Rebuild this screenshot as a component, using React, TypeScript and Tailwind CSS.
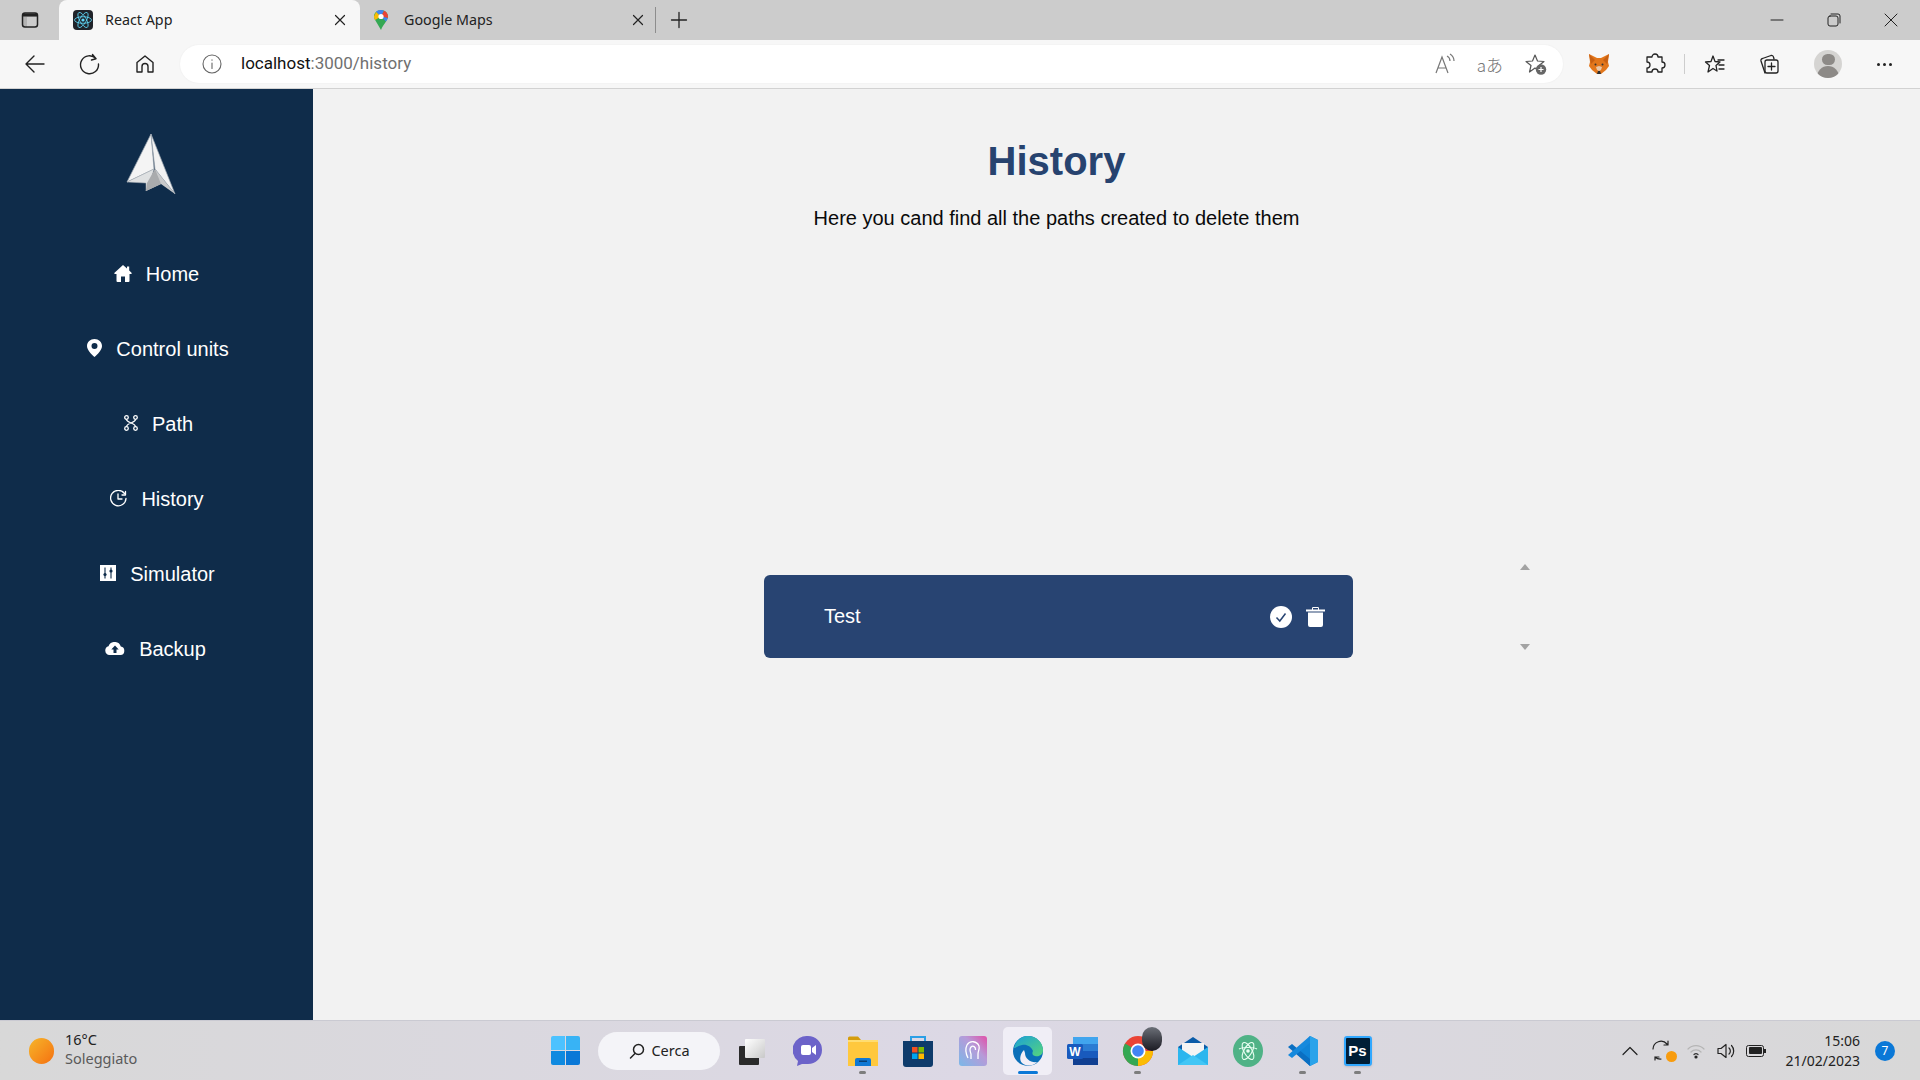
import React from 'react';

const Line: React.FC<{ size?: number; w?: number; color?: string; children: React.ReactNode; vb?: number }> = ({
  size = 20,
  w = 1.4,
  color = '#222',
  vb = 20,
  children,
}) => (
  <svg width={size} height={size} viewBox={`0 0 ${vb} ${vb}`} fill="none" stroke={color} strokeWidth={w} strokeLinecap="round" strokeLinejoin="round">
    {children}
  </svg>
);

const navItems: { label: string; icon: React.ReactNode }[] = [
  {
    label: 'Home',
    icon: (
      <svg width="18" height="17" viewBox="0 0 18 17">
        <path fill="#fff" d="M9 0L13 3.600V1.500H15.200V5.600L18 8.300 17 9H15.500V16A1 1 0 0 1 14.500 17H11V11.500H7V17H3.500A1 1 0 0 1 2.500 16V9H1L0 8.300Z" />
      </svg>
    ),
  },
  {
    label: 'Control units',
    icon: (
      <svg width="15" height="18" viewBox="0 0 15 18">
        <path fillRule="evenodd" fill="#fff" d="M7.500 0C3.300 0 0 3 0 7 0 11 4.500 15.500 7.500 18 10.500 15.500 15 11 15 7 15 3 11.700 0 7.500 0ZM7.500 4A3 3 0 1 1 7.500 10 3 3 0 1 1 7.500 4Z" />
      </svg>
    ),
  },
  {
    label: 'Path',
    icon: (
      <svg width="14" height="16" viewBox="0 0 14 16" fill="none" stroke="#fff" strokeWidth="1.300">
        <circle cx="2.500" cy="2.500" r="1.800" />
        <circle cx="11.500" cy="2.500" r="1.800" />
        <circle cx="2.500" cy="13.500" r="1.800" />
        <circle cx="11.500" cy="13.500" r="1.800" />
        <path d="M2.500 4.300C2.500 8 11.500 8 11.500 11.700M11.500 4.300C11.500 8 2.500 8 2.500 11.700" />
      </svg>
    ),
  },
  {
    label: 'History',
    icon: (
      <Line size={17} w={1.300} color="#fff" vb={17}>
        <path d="M14.500 3.500A7.700 7.700 0 1 0 16 8.500" />
        <path d="M8 4V9H12" />
        <path d="M15.500 1.500V5H12" />
      </Line>
    ),
  },
  {
    label: 'Simulator',
    icon: (
      <svg width="16" height="16" viewBox="0 0 16 16">
        <rect width="16" height="16" fill="#fff" />
        <path d="M5 2.500V13.500M11 2.500V13.500" stroke="#0f2c4a" strokeWidth="1.100" />
        <circle cx="5" cy="9.500" r="1.600" fill="#0f2c4a" />
        <circle cx="11" cy="6" r="1.600" fill="#0f2c4a" />
      </svg>
    ),
  },
  {
    label: 'Backup',
    icon: (
      <svg width="20" height="13" viewBox="0 0 20 13">
        <path fillRule="evenodd" fill="#fff" d="M4.500 13A4.500 4.500 0 0 1 3.500 4.200 6.500 6.500 0 0 1 15.800 4.500 4.300 4.300 0 0 1 15.500 13ZM10 3.500L6.300 7.500H8.500V11H11.500V7.500H13.700Z" />
      </svg>
    ),
  },
];

const Logo = () => (
  <svg width="52" height="64" viewBox="0 0 52 64">
    <path d="M27 1L3 49 30 36Z" fill="#f4f4f4" stroke="#9aa3ad" strokeWidth="0.700" />
    <path d="M27 1L51 61 31 36Z" fill="#f2f2f2" stroke="#9aa3ad" strokeWidth="0.700" />
    <path d="M3 49L30 36 28 43 22 58 22 50Z" fill="#dfe1e2" stroke="#aab0b6" strokeWidth="0.500" />
    <path d="M31 36L51 61 37 51 22 58Z" fill="#c9cacb" />
    <path d="M31 36L37 51 22 58 23 50Z" fill="#a9abad" />
  </svg>
);

const ReactFavicon = () => (
  <svg width="20" height="20" viewBox="0 0 20 20" className="rounded-sm">
    <rect width="20" height="20" fill="#20232a" />
    <g fill="none" stroke="#61dafb" strokeWidth="0.800">
      <ellipse cx="10" cy="10" rx="8.500" ry="3.300" />
      <ellipse cx="10" cy="10" rx="8.500" ry="3.300" transform="rotate(60 10 10)" />
      <ellipse cx="10" cy="10" rx="8.500" ry="3.300" transform="rotate(120 10 10)" />
    </g>
    <circle cx="10" cy="10" r="1.600" fill="#61dafb" />
  </svg>
);

const MapsFavicon = () => (
  <svg width="16" height="22" viewBox="0 0 16 22">
    <path d="M8 1C3.800 1 1 4 1 7.500 1 9.500 2 11 3 12.500L8 21C9 18 11 15.500 13 12.500 14 11 15 9.500 15 7.500 15 4 12.200 1 8 1Z" fill="#34a853" />
    <path d="M3.100 2.700L1 7.500C1 9 1.500 10 2 11L8 7.500Z" fill="#fbbc04" />
    <path d="M3 2.800C4.300 1.600 6 1 8 1 9 1 10 1.200 11 1.700L8 7.500Z" fill="#4285f4" />
    <path d="M11 1.700C13 2.500 15 4.500 15 7.500 15 8 15 8.500 14.700 9L8 7.500Z" fill="#ea4335" />
    <path d="M14.700 9C14.300 10.500 13.500 11.700 13 12.500L8 7.500Z" fill="#4285f4" />
    <circle cx="8" cy="7.500" r="2.600" fill="#fff" />
  </svg>
);

const Fox = () => (
  <svg width="22" height="22" viewBox="0 0 22 22">
    <path d="M1 1L9 5H13L21 1 20 9 21 13 18 17 13 21H9L4 17 1 13 2 9Z" fill="#e2761b" />
    <path d="M1 1L7 7 3 11ZM21 1L15 7 19 11Z" fill="#c85f12" />
    <path d="M8 14L11 13 14 14 13 17 11 18 9 17Z" fill="#e9c7a8" />
    <path d="M9 21L10 18H12L13 21Z" fill="#2f2f2f" />
    <circle cx="7.500" cy="11.500" r="1" fill="#333" />
    <circle cx="14.500" cy="11.500" r="1" fill="#333" />
  </svg>
);

const taskApps: { dot?: 'grey' | 'blue'; active?: boolean; icon: React.ReactNode }[] = [
  {
    icon: (
      <svg width="28" height="30" viewBox="0 0 28 30">
        <defs>
          <linearGradient id="desk" x1="0" y1="0" x2="1" y2="1">
            <stop offset="0" stopColor="#ffffff" />
            <stop offset="1" stopColor="#c9c9c9" />
          </linearGradient>
        </defs>
        <rect x="0" y="10" width="20" height="19" rx="1" fill="#2a2a2a" />
        <rect x="6" y="3" width="20" height="19" rx="1" fill="url(#desk)" />
      </svg>
    ),
  },
  {
    icon: (
      <svg width="30" height="32" viewBox="0 0 30 32">
        <path d="M15 1A14 14 0 0 1 15 29H9L4 31 5 26A14 14 0 0 1 15 1Z" fill="#6c63c9" />
        <rect x="8" y="10" width="10" height="10" rx="2" fill="#fff" />
        <path d="M19 13L23 10V20L19 17Z" fill="#fff" />
      </svg>
    ),
  },
  {
    dot: 'grey',
    icon: (
      <svg width="30" height="32" viewBox="0 0 30 32">
        <path d="M0 3A1.500 1.500 0 0 1 1.500 1.500H10L13 5H0Z" fill="#d59d0c" />
        <rect x="0" y="5" width="30" height="26" fill="#ffc83d" />
        <rect x="0" y="5" width="30" height="2" fill="#ffdd70" />
        <path d="M7 25A2 2 0 0 1 9 23H21A2 2 0 0 1 23 25V31H7Z" fill="#0f78d4" />
        <rect x="11" y="25.500" width="8" height="1.500" fill="#083f73" />
      </svg>
    ),
  },
  {
    icon: (
      <svg width="30" height="34" viewBox="0 0 30 34">
        <path d="M8 7V3H22V7" fill="none" stroke="#2b9fe6" strokeWidth="2" />
        <path d="M0 7H30V30A3 3 0 0 1 27 33H3A3 3 0 0 1 0 30Z" fill="#0e3b6b" />
        <rect x="9" y="13" width="5.500" height="5.500" fill="#f25022" />
        <rect x="15.500" y="13" width="5.500" height="5.500" fill="#7fba00" />
        <rect x="9" y="19.500" width="5.500" height="5.500" fill="#00a4ef" />
        <rect x="15.500" y="19.500" width="5.500" height="5.500" fill="#ffb900" />
      </svg>
    ),
  },
  {
    icon: (
      <svg width="28" height="30" viewBox="0 0 28 30">
        <defs>
          <linearGradient id="app5" x1="0" y1="1" x2="1" y2="0">
            <stop offset="0" stopColor="#7ab8e8" />
            <stop offset="0.600" stopColor="#b79ad8" />
            <stop offset="1" stopColor="#e14fa8" />
          </linearGradient>
        </defs>
        <rect width="28" height="30" rx="3" fill="url(#app5)" />
        <path d="M9 22C7 18 6 13 8 9 11 4 18 5 20 10 21 13 19 15 19 18V23M12 23V18C11 15 10 13 12 11 14 9 17 11 16.500 14" fill="none" stroke="#fff" strokeWidth="1.300" />
      </svg>
    ),
  },
  {
    active: true,
    dot: 'blue',
    icon: (
      <svg width="30" height="32" viewBox="0 0 30 32">
        <defs>
          <linearGradient id="edgeA" x1="0" y1="0" x2="1" y2="1">
            <stop offset="0" stopColor="#1aa0d8" />
            <stop offset="1" stopColor="#57d57b" />
          </linearGradient>
        </defs>
        <circle cx="15" cy="16" r="15" fill="#0b6fb8" />
        <path d="M1 13C3 4 10 1 15 1 24 1 30 8 30 15 30 20 26 22 22 21 19 20 19 18 20 16 18 11 13 9 9 10 5 11 2 13 1 13Z" fill="url(#edgeA)" />
        <path d="M12 18C12 24 18 28 24 27 21 31 14 32 9 28 6 25 7 19 11 15Z" fill="#f2eff7" />
      </svg>
    ),
  },
  {
    icon: (
      <svg width="32" height="30" viewBox="0 0 32 30">
        <rect x="6" y="1" width="25" height="28" rx="1.500" fill="#2b7cd3" />
        <rect x="6" y="1" width="25" height="7" fill="#41a5ee" />
        <rect x="6" y="15" width="25" height="7" fill="#185abd" />
        <rect x="6" y="22" width="25" height="7" fill="#103f91" />
        <rect x="0" y="8" width="16" height="15" rx="1.500" fill="#185abd" />
        <text x="8" y="20" textAnchor="middle" fontSize="12" fontWeight="700" fill="#fff" fontFamily="'Liberation Sans', sans-serif">W</text>
      </svg>
    ),
  },
  {
    dot: 'grey',
    icon: (
      <div className="relative w-[32px] h-[32px]">
        <svg width="32" height="32" viewBox="0 0 32 32">
          <circle cx="16" cy="16" r="15" fill="#ea4335" />
          <path d="M16 16L3 8.500A15 15 0 0 0 16 31Z" fill="#34a853" />
          <path d="M16 16H31A15 15 0 0 1 16 31Z" fill="#fbbc04" />
          <circle cx="16" cy="16" r="7.500" fill="#fff" />
          <circle cx="16" cy="16" r="5.800" fill="#4285f4" />
        </svg>
        <div className="absolute -top-[8px] -right-[8px] w-[20px] h-[24px] rounded-full bg-gradient-to-b from-[#6c7078] to-[#1c1c24]" />
      </div>
    ),
  },
  {
    icon: (
      <svg width="30" height="30" viewBox="0 0 30 30">
        <path d="M15 1L30 11V29H0V11Z" fill="#0a5ca8" />
        <path d="M4 7H26V20L15 25 4 20Z" fill="#f4f4f4" />
        <path d="M0 11L15 21 30 11V29H0Z" fill="#2cb6ee" />
        <path d="M0 29L15 19 30 29Z" fill="#42c6f5" />
      </svg>
    ),
  },
  {
    icon: (
      <svg width="30" height="32" viewBox="0 0 30 32">
        <ellipse cx="15" cy="16" rx="15" ry="16" fill="#4fb286" />
        <g fill="none" stroke="#e9fff2" strokeWidth="1.100">
          <ellipse cx="15" cy="16" rx="9.500" ry="4" transform="rotate(60 15 16)" />
          <ellipse cx="15" cy="16" rx="9.500" ry="4" transform="rotate(120 15 16)" />
          <path d="M6 14C9 12 21 12 24 14" />
        </g>
        <circle cx="15" cy="16" r="1.800" fill="#e9fff2" />
      </svg>
    ),
  },
  {
    dot: 'grey',
    icon: (
      <svg width="30" height="32" viewBox="0 0 30 32">
        <path d="M22 1L30 5V27L22 31 8 18Z" fill="#0f84d8" />
        <path d="M22 1V31L30 27V5Z" fill="#2aa3ea" />
        <path d="M4 9L22 24V31L0 12Z" fill="#0a6fc2" />
        <path d="M4 23L22 8V1L0 20Z" fill="#1689dd" />
      </svg>
    ),
  },
  {
    dot: 'grey',
    icon: (
      <div className="w-[28px] h-[30px] rounded-[3px] bg-[#001e36] border-2 border-[#31a8ff] flex items-center justify-center shadow-sm">
        <span className="text-[#ffffff] text-[15px] font-bold leading-none font-['Liberation_Sans',sans-serif]">Ps</span>
      </div>
    ),
  },
];

export default function App() {
  return (
    <div className="w-[1920px] h-[1080px] flex flex-col overflow-hidden bg-[#f2f2f2] font-['Liberation_Sans',Arial,sans-serif] text-black">
      {/* Tab strip */}
      <div className="h-[40px] bg-[#cccccc] flex items-end shrink-0 font-['Noto_Sans',sans-serif] text-[14.300px] text-[#222]">
        <div className="w-[59px] h-[40px] flex items-center justify-center">
          <Line size={20}>
            <rect x="2.500" y="3" width="15" height="14" rx="2.500" strokeWidth="1.500" />
            <path d="M2.500 3.500H17.500V7H7V17H2.500Z" fill="#222" stroke="none" opacity="0.15" />
            <path d="M3 3.500H17V6.500H3Z" fill="#222" stroke="none" />
          </Line>
        </div>
        <div className="w-[301px] h-[40px] bg-[#f7f7f7] rounded-t-lg flex items-center pl-[14px] pr-[12px]">
          <ReactFavicon />
          <span className="ml-[12px]">React App</span>
          <span className="ml-auto">
            <Line size={16} vb={16} w={1.200}>
              <path d="M3.500 3.500L12.500 12.500M12.500 3.500L3.500 12.500" />
            </Line>
          </span>
        </div>
        <div className="w-[295px] h-[40px] flex items-center pl-[13px] pr-[9px]">
          <MapsFavicon />
          <span className="ml-[15px]">Google Maps</span>
          <span className="ml-auto">
            <Line size={16} vb={16} w={1.200}>
              <path d="M3.500 3.500L12.500 12.500M12.500 3.500L3.500 12.500" />
            </Line>
          </span>
        </div>
        <div className="w-px h-[26px] mb-[7px] bg-[#8d8d8d]" />
        <div className="w-[46px] h-[40px] flex items-center justify-center">
          <Line size={20} w={1.300}>
            <path d="M10 2.500V17.500M2.500 10H17.500" />
          </Line>
        </div>
        <div className="flex-1" />
        <div className="flex h-[40px] items-center pr-[1px]">
          <div className="w-[57px] flex justify-center">
            <Line size={16} vb={16} w={1}>
              <path d="M2 8H14" />
            </Line>
          </div>
          <div className="w-[57px] flex justify-center">
            <Line size={16} vb={16} w={1}>
              <rect x="2" y="4" width="10" height="10" rx="2" />
              <path d="M5 2H12A2 2 0 0 1 14 4V11" />
            </Line>
          </div>
          <div className="w-[57px] flex justify-center">
            <Line size={16} vb={16} w={1}>
              <path d="M2 2L14 14M14 2L2 14" />
            </Line>
          </div>
        </div>
      </div>

      {/* Toolbar */}
      <div className="h-[49px] bg-[#f7f7f7] border-b border-[#d2d2d2] flex items-center shrink-0">
        <div className="w-[180px] flex items-center pl-[23px] gap-[31px]">
          <Line size={24} vb={24} w={1.400}>
            <path d="M21 12H3M11 4L3 12 11 20" />
          </Line>
          <Line size={24} vb={24} w={1.400}>
            <path d="M18 6.500A9 9 0 1 0 20.500 12M14.500 2.500L18 6.800 13.500 8" />
          </Line>
          <Line size={24} vb={24} w={1.400}>
            <path d="M4 10.500L12 4 20 10.500V20H15V14.500A3 3 0 0 0 9 14.500V20H4Z" />
          </Line>
        </div>
        <div className="w-[1383px] h-[38px] bg-white rounded-full flex items-center pl-[21px] pr-[15px] shadow-[0_0_2px_rgba(0,0,0,0.06)]">
          <Line size={22} vb={22} w={1.100} color="#666">
            <circle cx="11" cy="11" r="9" />
            <path d="M11 10V15.500M11 6.700V7.300" />
          </Line>
          <span className="ml-[18px] font-['Roboto',sans-serif] text-[17px] text-[#111]">
            localhost<span className="text-[#707070]">:3000/history</span>
          </span>
          <div className="ml-auto flex items-center gap-[21px]">
            <svg width="22" height="22" viewBox="0 0 22 22" fill="none" stroke="#777" strokeWidth="1.200">
              <path d="M2 20L8 4 14 20M4 15H12" />
              <path d="M13 3C15 4 16 6 16 8M16 1C19 3 20 5 20 8" />
            </svg>
            <span className="text-[#777] text-[17px] leading-none font-light font-['Noto_Sans_CJK_JP',sans-serif]">aあ</span>
            <svg width="24" height="24" viewBox="0 0 24 24" fill="none">
              <path d="M11 3L13.500 9 20 9.500 15 13.500 16 19 11 16 5.500 20 7 13.500 2 9.500 8.500 9Z" stroke="#555" strokeWidth="1.200" strokeLinejoin="round" />
              <circle cx="17" cy="17.500" r="5.200" fill="#666" />
              <path d="M17 15V20M14.500 17.500H19.500" stroke="#fff" strokeWidth="1.200" />
            </svg>
          </div>
        </div>
        <div className="flex items-center flex-1">
          <div className="w-[72px] flex justify-center">
            <Fox />
          </div>
          <div className="w-[39px] flex justify-center">
            <Line size={22} vb={22} w={1.300}>
              <path d="M8 4A3 3 0 0 1 14 4H18V9A3 3 0 0 1 18 15V19H14A3 3 0 0 0 8 19H3V15A3 3 0 0 0 3 9V4Z" />
            </Line>
          </div>
          <div className="w-px h-[20px] bg-[#cdcdcd] ml-[10px]" />
          <div className="w-[59px] flex justify-center">
            <Line size={22} vb={22} w={1.300}>
              <path d="M9 3L11 8.500 16 9 12 12.500 13 18 9 15.500 4 19 5.500 12.500 1.500 9 7 8.500ZM14 7H20M15 12H20M15 16H20" />
            </Line>
          </div>
          <div className="w-[50px] flex justify-center">
            <Line size={22} vb={22} w={1.300}>
              <path d="M7 20L3 8A2 2 0 0 1 4.500 5.500L13 2.500A2 2 0 0 1 15.500 4L16 6" />
              <rect x="7" y="7" width="13" height="13" rx="2" />
              <path d="M13.500 10V17M10 13.500H17" />
            </Line>
          </div>
          <div className="w-[68px] flex justify-center">
            <div className="w-[28px] h-[28px] rounded-full bg-[#d5d4d2] overflow-hidden flex flex-col items-center">
              <div className="w-[13px] h-[13px] rounded-full bg-[#8d8a87] mt-[4px]" />
              <div className="w-[22px] h-[14px] rounded-t-full bg-[#8d8a87] mt-[1px]" />
            </div>
          </div>
          <div className="flex-1 flex justify-center gap-[3px] pr-[14px]">
            <div className="w-[3px] h-[3px] rounded-full bg-[#222]" />
            <div className="w-[3px] h-[3px] rounded-full bg-[#222]" />
            <div className="w-[3px] h-[3px] rounded-full bg-[#222]" />
          </div>
        </div>
      </div>

      {/* Page */}
      <div className="flex-1 flex min-h-0">
        <aside className="w-[313px] bg-[#0f2c4a] shrink-0 flex flex-col">
          <div className="h-[111px] flex items-start justify-center pt-[44px] pr-[14px]">
            <Logo />
          </div>
          <nav className="flex flex-col pl-[32px] mt-[59px] gap-[52px]">
            {navItems.map((item) => (
              <div key={item.label} className="grid grid-cols-[1fr_auto_1fr] items-center h-[23px] text-white text-[20px]">
                <div className="flex justify-end pr-[14px] -translate-y-[1px]">{item.icon}</div>
                <span>{item.label}</span>
                <div />
              </div>
            ))}
          </nav>
        </aside>

        <main className="flex-1 flex flex-col bg-[#f2f2f2]">
          <div className="flex flex-col items-center pr-[120px] pt-[49px]">
            <h1 className="text-[40px] leading-[46px] font-bold text-[#27436f]">History</h1>
            <p className="text-[20px] leading-[23px] mt-[23px] text-[#0a0a0a]">Here you cand find all the paths created to delete them</p>
          </div>
          <div className="flex ml-[451px] mt-[330px]">
            <div className="mt-[15px] w-[589px] h-[83px] rounded-[6px] bg-[#284472] flex items-center pl-[60px] pr-[28px] text-white text-[20px]">
              <span className="pb-[2px]">Test</span>
              <div className="ml-auto flex items-center gap-[14px]">
                <svg width="22" height="22" viewBox="0 0 22 22">
                  <circle cx="11" cy="11" r="11" fill="#fff" />
                  <path d="M6.500 11.500L9.800 15 15.500 7.500" fill="none" stroke="#284472" strokeWidth="1.500" />
                </svg>
                <svg width="19" height="20" viewBox="0 0 19 20">
                  <path fill="#fff" d="M6 2.500V1.200A1.200 1.200 0 0 1 7.200 0H11.800A1.200 1.200 0 0 1 13 1.200V2.500H19V4.500H0V2.500ZM7 2.500H12V1H7ZM2 5.500H17V18A2 2 0 0 1 15 20H4A2 2 0 0 1 2 18Z" fillRule="evenodd" />
                </svg>
              </div>
            </div>
            <div className="ml-[167px] w-[10px] h-[90px] pt-[4px] flex flex-col justify-between items-center">
              <div className="w-0 h-0 border-x-[5px] border-x-transparent border-b-[6px] border-b-[#a3a3a3]" />
              <div className="w-0 h-0 border-x-[5px] border-x-transparent border-t-[6px] border-t-[#a3a3a3]" />
            </div>
          </div>
        </main>
      </div>

      {/* Taskbar */}
      <div className="h-[60px] shrink-0 border-t border-[#cacad2] bg-gradient-to-r from-[#d8d8d8] via-[#dcd8e5] to-[#d8d8d8] flex items-center font-['Noto_Sans',sans-serif]">
        <div className="w-[551px] flex items-center pl-[29px]">
          <div className="w-[25px] h-[26px] rounded-full bg-gradient-to-br from-[#f5b52a] to-[#f46f0f]" />
          <div className="ml-[11px] leading-[19px] pb-[3px] text-[14.500px]">
            <div className="text-[#222]">16°C</div>
            <div className="text-[#5a5a5a]">Soleggiato</div>
          </div>
        </div>
        <div className="w-[29px] h-[29px] grid grid-cols-2 gap-px">
          <div className="bg-[#4cc2ff] rounded-tl-[2px]" />
          <div className="bg-[#38b3f5] rounded-tr-[2px]" />
          <div className="bg-[#0f8ae0] rounded-bl-[2px]" />
          <div className="bg-[#0a78d7] rounded-br-[2px]" />
        </div>
        <div className="ml-[18px] w-[122px] h-[38px] rounded-full bg-[#f4f4f8] flex items-center justify-center gap-[5px] text-[14.500px] text-[#222]">
          <Line size={18} vb={18} w={1.500}>
            <circle cx="10.500" cy="7.500" r="5" />
            <path d="M7 11.500L2.500 16" />
          </Line>
          <span>Cerca</span>
        </div>
        <div className="flex items-center ml-[5px]">
          {taskApps.map((app, i) => (
            <div key={i} className="w-[55px] h-[48px] flex items-center justify-center relative">
              {app.active && <div className="absolute inset-y-0 inset-x-[3px] rounded-[5px] bg-[#f0eef6]" />}
              <div className="relative">{app.icon}</div>
              {app.dot === 'grey' && <div className="absolute bottom-[1px] left-[24px] w-[7px] h-[3px] rounded-full bg-[#7d7d7d]" />}
              {app.dot === 'blue' && <div className="absolute bottom-[1px] left-[18px] w-[20px] h-[3px] rounded-full bg-[#0a78d7]" />}
            </div>
          ))}
        </div>
        <div className="flex-1" />
        <div className="flex items-center pr-[25px]">
          <Line size={18} vb={18} w={1.200}>
            <path d="M2 12.500L9 5.500 16 12.500" />
          </Line>
          <div className="relative ml-[12px]">
            <Line size={22} vb={22} w={1.200}>
              <path d="M2 9A8 8 0 0 1 16 4M17 1V5H13M4 17H8M4 20V17M4 17A8 8 0 0 0 10 19" />
            </Line>
            <div className="absolute right-[-4px] bottom-[0px] w-[11px] h-[11px] rounded-full bg-[#f89c0e]" />
          </div>
          <div className="ml-[13px]">
            <Line size={20} vb={20} w={1.200} color="#b5b5b5">
              <path d="M2 8A11 11 0 0 1 18 8M5 11A7 7 0 0 1 15 11" />
              <path d="M8 13.500A3 3 0 0 1 12 13.500" stroke="#333" />
              <circle cx="10" cy="16" r="1" fill="#222" stroke="#222" />
            </Line>
          </div>
          <div className="ml-[10px]">
            <Line size={20} vb={20} w={1.200}>
              <path d="M2 7.500H5L10 3.500V16.500L5 12.500H2ZM13 7A4 4 0 0 1 13 13M15.500 4.500A8 8 0 0 1 15.500 15.500" />
            </Line>
          </div>
          <div className="ml-[10px] flex items-center">
            <div className="w-[18px] h-[12px] border-[1.500px] border-[#222] rounded-[2.500px] p-[1.500px]">
              <div className="w-full h-full bg-[#222] rounded-[1px]" />
            </div>
            <div className="w-[2px] h-[4px] bg-[#222]" />
          </div>
          <div className="ml-[20px] w-[74px] text-right text-[14px] leading-[20px] text-[#222] whitespace-nowrap flex flex-col items-end">
            <div>15:06</div>
            <div>21/02/2023</div>
          </div>
          <div className="ml-[15px] w-[20px] h-[20px] rounded-full bg-[#0a78d7] text-white text-[12px] flex items-center justify-center">7</div>
        </div>
      </div>
    </div>
  );
}
